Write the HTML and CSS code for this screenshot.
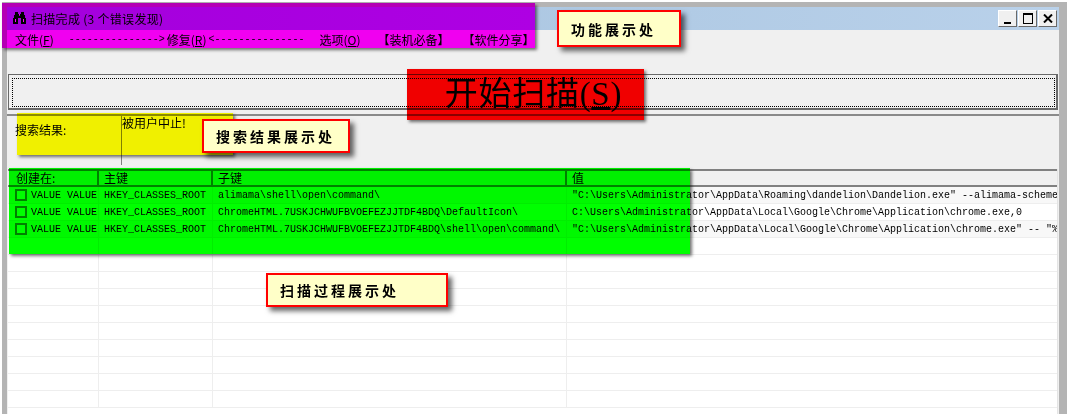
FILE: index.html
```html
<!DOCTYPE html>
<html lang="zh">
<head>
    <meta charset="UTF-8">
    <meta name="viewport" content="width=device-width, initial-scale=1.0">
    <title>扫描完成</title>
    <link rel="stylesheet" href="styles.css">
</head>
<body>
    <div class="window">
        <div class="title-bar">
            <svg class="title-icon" width="15" height="13" viewBox="0 0 15 13">
                <path d="M3 0h3v2h1v2h1V2h1V0h3v3h1v3h1v6H9V6H6v6H1V6h1V3h1z" fill="#000"/>
                <path d="M3 7h1v3H3zM11 7h1v3h-1zM7 2h1v1H7z" fill="#fff"/>
            </svg>
            <span class="title-text">扫描完成 (3 个错误发现)</span>
            <div class="title-buttons">
                <button class="win-btn"><span class="icon-min"></span></button>
                <button class="win-btn"><span class="icon-max"></span></button>
                <button class="win-btn">
                    <svg width="10" height="9" viewBox="0 0 10 9"><path d="M1 0.5l8 8M9 0.5l-8 8" stroke="#000" stroke-width="2" fill="none"/></svg>
                </button>
            </div>
        </div>
        <div class="menu-bar">
            <span class="menu-file">文件(<u>F</u>)</span>
            <span class="menu-fix"><span class="dash">---------------&gt;</span><span class="fix-label">修复(<u>R</u>)</span><span class="dash">&lt;---------------</span></span>
            <span class="menu-opt">选项(<u>O</u>)</span>
            <span class="menu-must">【装机必备】</span>
            <span class="menu-share">【软件分享】</span>
        </div>
        <div class="scan-section">
            <div class="scan-btn"><span class="scan-label">开始扫描(<u>S</u>)</span></div>
        </div>
        <div class="result-section">
            <div class="result-label">搜索结果:</div>
            <div class="result-value">被用户中止!</div>
        </div>
        <div class="list">
            <div class="row list-head">
                <div class="cell c1">创建在:</div>
                <div class="cell c2">主键</div>
                <div class="cell c3">子键</div>
                <div class="cell c4">值</div>
            </div>
            <div class="list-body" id="listBody"></div>
        </div>
    </div>

    <!-- 标注 -->
    <div class="mark mark-menu"></div>
    <div class="mark mark-scan"></div>
    <div class="mark mark-result"></div>
    <div class="mark mark-list"></div>
    <div class="note note-menu">功能展示处</div>
    <div class="note note-result">搜索结果展示处</div>
    <div class="note note-list">扫描过程展示处</div>

    <script>
        const rows = [
            ['alimama\\shell\\open\\command\\', '"C:\\Users\\Administrator\\AppData\\Roaming\\dandelion\\Dandelion.exe" --alimama-scheme'],
            ['ChromeHTML.7USKJCHWUFBVOEFEZJJTDF4BDQ\\DefaultIcon\\', 'C:\\Users\\Administrator\\AppData\\Local\\Google\\Chrome\\Application\\chrome.exe,0'],
            ['ChromeHTML.7USKJCHWUFBVOEFEZJJTDF4BDQ\\shell\\open\\command\\', '"C:\\Users\\Administrator\\AppData\\Local\\Google\\Chrome\\Application\\chrome.exe" -- "%']
        ];
        const body = document.getElementById('listBody');
        for (let i = 0; i < 13; i++) {
            const r = rows[i];
            const row = document.createElement('div');
            row.className = 'row' + (i % 2 === 0 && r ? ' row-odd' : '');
            row.innerHTML = r
                ? `<div class="cell c1"><span class="check"></span>VALUE VALUE</div>
                   <div class="cell c2">HKEY_CLASSES_ROOT</div>
                   <div class="cell c3"></div><div class="cell c4"></div>`
                : '<div class="cell c1"></div><div class="cell c2"></div><div class="cell c3"></div><div class="cell c4"></div>';
            if (r) {
                row.children[2].textContent = r[0];
                row.children[3].textContent = r[1];
            }
            body.appendChild(row);
        }
    </script>
</body>
</html>
```

FILE: styles.css
```css
html, body {
    margin: 0;
    padding: 0;
    height: 414px;
    overflow: hidden;
    background-color: #fff;
}
body {
    position: relative;
    font-family: "Noto Sans CJK SC", "Liberation Sans", sans-serif;
    font-size: 12px;
    color: #000;
}
.window {
    margin: 2px 0 0 2px;
    height: 412px;
    box-sizing: border-box;
    border: solid #b4b4b4;
    border-width: 5px 8px 0 5px;
    background-color: #f0f0f0;
    display: flex;
    flex-direction: column;
}
.title-bar {
    height: 23px;
    background: linear-gradient(to right, #a3c0dc, #b9d1ea);
    display: flex;
    align-items: center;
    padding-left: 5px;
    flex-shrink: 0;
}
.title-icon {
    margin-right: 4px;
}
.title-text {
    line-height: 14px;
    letter-spacing: 0.3px;
}
.title-buttons {
    margin-left: auto;
    display: flex;
    gap: 1px;
    margin-right: 2px;
}
.win-btn {
    width: 19px;
    height: 17px;
    padding: 0;
    background-color: #f0f0f0;
    border: 1px solid;
    border-color: #fff #696969 #696969 #fff;
    display: flex;
    align-items: center;
    justify-content: center;
}
.icon-min {
    width: 7px;
    height: 2px;
    background-color: #000;
    margin-top: 8px;
}
.icon-max {
    width: 8px;
    height: 8px;
    border: 1px solid #000;
    border-top-width: 2px;
}
.menu-bar {
    height: 19px;
    display: flex;
    align-items: center;
    line-height: 14px;
    flex-shrink: 0;
}
.menu-file { margin-left: 8px; }
.menu-fix { margin-left: 15px; display: flex; align-items: center; }
.dash {
    font-family: "Liberation Mono", monospace;
    font-size: 10px;
}
.fix-label { margin: 0 2px; }
.menu-opt { margin-left: 15px; }
.menu-must, .menu-share { font-feature-settings: "halt"; }
.menu-must { margin-left: 23px; }
.menu-share { margin-left: 25px; }

.scan-section {
    padding: 25px 1px 0 1px;
    flex-shrink: 0;
}
.scan-btn {
    height: 36px;
    box-sizing: border-box;
    border: 1px solid #696969;
    border-width: 1px 2px 2px 1px;
    padding: 3px 1px 1px 3px;
    display: flex;
}
.scan-label {
    flex: 1;
    border: 1px dotted #000;
    display: flex;
    align-items: center;
    justify-content: center;
    padding-top: 2px;
    font-family: "Liberation Serif", "Noto Sans CJK SC", serif;
    font-size: 33px;
    letter-spacing: 0.7px;
    line-height: 26px;
    white-space: pre;
}
.result-section {
    margin-top: 4px;
    height: 53px;
    border-top: 2px solid #8a8a8a;
    display: flex;
    flex-shrink: 0;
}
.result-label {
    margin: 6px 0 0 8px;
    width: 106px;
    line-height: 16px;
}
.result-value {
    height: 49px;
    border-left: 1px solid #808080;
    line-height: 13px;
}
.list {
    flex: 1;
    margin: 0 1px;
    background-color: #fff;
    overflow: hidden;
    border-right: 1px solid #e4e4e4;
}
.row {
    display: flex;
    height: 17px;
    box-sizing: border-box;
    border-bottom: 1px solid #eee;
    font-family: "Liberation Mono", monospace;
    font-size: 10px;
    line-height: 17px;
}
.row-odd {
    background-color: #f8f8f8;
}
.list-head {
    background-color: #f0f0f0;
    border-top: 2px solid #808080;
    border-bottom: 2px solid #808080;
    height: 18px;
    font-family: "Noto Sans CJK SC", sans-serif;
    font-size: 12px;
    line-height: 14px;
}
.cell {
    box-sizing: border-box;
    white-space: pre;
    overflow: hidden;
    border-right: 1px solid #eee;
    padding-left: 5px;
}
.list-head .cell {
    border-right: 2px solid #808080;
    overflow: visible;
}
.list-head .c4 { border-right: none; }
.c1 { width: 91px; padding-left: 7px; display: flex; align-items: center; }
.c2 { width: 114px; }
.c3 { width: 354px; }
.c4 { flex: 1; border-right: none; }
.list-head .c1 { padding-left: 8px; }
.check {
    width: 12px;
    height: 12px;
    box-sizing: border-box;
    border: 2px solid #808080;
    margin: 0 4px 1px 0;
    flex-shrink: 0;
    background-color: #fff;
}

/* 标注层 */
.mark {
    position: absolute;
    mix-blend-mode: multiply;
    box-shadow: 2px 2px 3px rgba(0, 0, 0, 0.55);
}
.mark-menu { left: 2px; top: 3px; width: 533px; height: 45px; background-color: #f0f; }
.mark-scan { left: 407px; top: 69px; width: 237px; height: 51px; background-color: #f00; }
.mark-result { left: 17px; top: 113px; width: 216px; height: 42px; background-color: #ff0; }
.mark-list { left: 9px; top: 168px; width: 681px; height: 86px; background-color: #0f0; }
.note {
    position: absolute;
    box-sizing: border-box;
    background-color: #ffffc8;
    border: 2px solid #f00;
    box-shadow: 4px 4px 5px rgba(0, 0, 0, 0.6);
    padding-left: 12px;
    display: flex;
    align-items: center;
    font-size: 14px;
    font-weight: bold;
    letter-spacing: 3px;
}
.note-menu { left: 557px; top: 10px; width: 124px; height: 37px; }
.note-result { left: 202px; top: 119px; width: 148px; height: 34px; }
.note-list { left: 266px; top: 273px; width: 182px; height: 34px; }
```
